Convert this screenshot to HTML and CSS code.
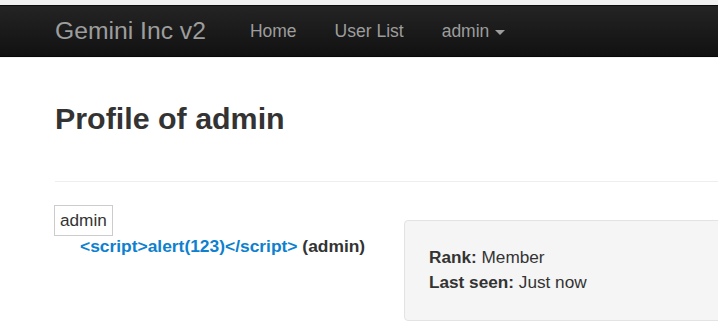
FILE: index.html
```html
<!DOCTYPE html>
<html lang="en">
<head>
<meta charset="utf-8">
<title>Profile of admin</title>
<link rel="stylesheet" href="styles.css">
</head>
<body>
<div class="topstrip"></div>
<nav class="navbar">
  <a class="brand" href="#">Gemini Inc v2</a>
  <ul class="nav">
    <li><a href="#">Home</a></li>
    <li><a href="#">User List</a></li>
    <li><a href="#">admin <span class="caret"></span></a></li>
  </ul>
</nav>
<main class="page">
  <h2 class="title">Profile of admin</h2>
  <hr class="rule">
  <div class="row">
    <div class="left">
      <div class="namebox">admin</div>
      <div class="userline"><a href="#" class="userlink">&lt;script&gt;alert(123)&lt;/script&gt;</a> (admin)</div>
    </div>
    <div class="well">
      <div><b>Rank:</b> Member</div>
      <div><b>Last seen:</b> Just now</div>
    </div>
  </div>
</main>
</body>
</html>
```
FILE: styles.css
```css
html, body {
  margin: 0;
  padding: 0;
  overflow: hidden;
  background: #fff;
}
body {
  font-family: "Liberation Sans", Arial, sans-serif;
  color: #333;
  font-size: 17px;
}
.topstrip {
  height: 5px;
  background: #f1f1f1;
}
.navbar {
  height: 52px;
  box-sizing: border-box;
  background: linear-gradient(to bottom, #242424 0%, #111 100%);
  border-top: 1px solid #0c0c0c;
  border-bottom: 1px solid #080808;
  display: flex;
  align-items: center;
  padding-left: 55px;
}
.brand {
  color: #9d9d9d;
  font-size: 24.7px;
  text-decoration: none;
  margin-right: 25px;
  line-height: 30px;
}
.nav {
  list-style: none;
  margin: 0;
  padding: 0;
  display: flex;
}
.nav a {
  display: block;
  color: #9d9d9d;
  text-decoration: none;
  font-size: 17.5px;
  padding: 0 19px;
  line-height: 20px;
}
.caret {
  display: inline-block;
  width: 0;
  height: 0;
  border-top: 5px solid #9d9d9d;
  border-left: 5px solid transparent;
  border-right: 5px solid transparent;
  vertical-align: middle;
  margin-left: 1px;
}
.page {
  width: 1100px;
  padding-left: 55px;
  padding-top: 1px;
  border-top: 1px solid #f4f4f4;
}
.title {
  font-size: 30.4px;
  font-weight: bold;
  line-height: 34px;
  margin: 42px 0 0;
}
.rule {
  border: 0;
  border-top: 1px solid #eee;
  margin: 46px 0 23px;
  height: 0;
}
.row {
  display: flex;
  align-items: flex-start;
}
.left {
  flex: 0 0 349px;
}
.namebox {
  display: inline-block;
  border: 1px solid #ccc;
  padding: 4px 5px;
  line-height: 21px;
  margin-left: -1px;
  font-size: 17.2px;
}
.userline {
  padding-left: 25px;
  font-weight: bold;
  line-height: 20px;
  font-size: 17.4px;
}
.userlink {
  color: #0d80cf;
  text-decoration: none;
}
.well {
  flex: 1;
  margin-top: 15px;
  background: #f5f5f5;
  border: 1px solid #e3e3e3;
  border-radius: 4px;
  padding: 24px 24px 25px;
  line-height: 25px;
  font-size: 17.2px;
}
```
